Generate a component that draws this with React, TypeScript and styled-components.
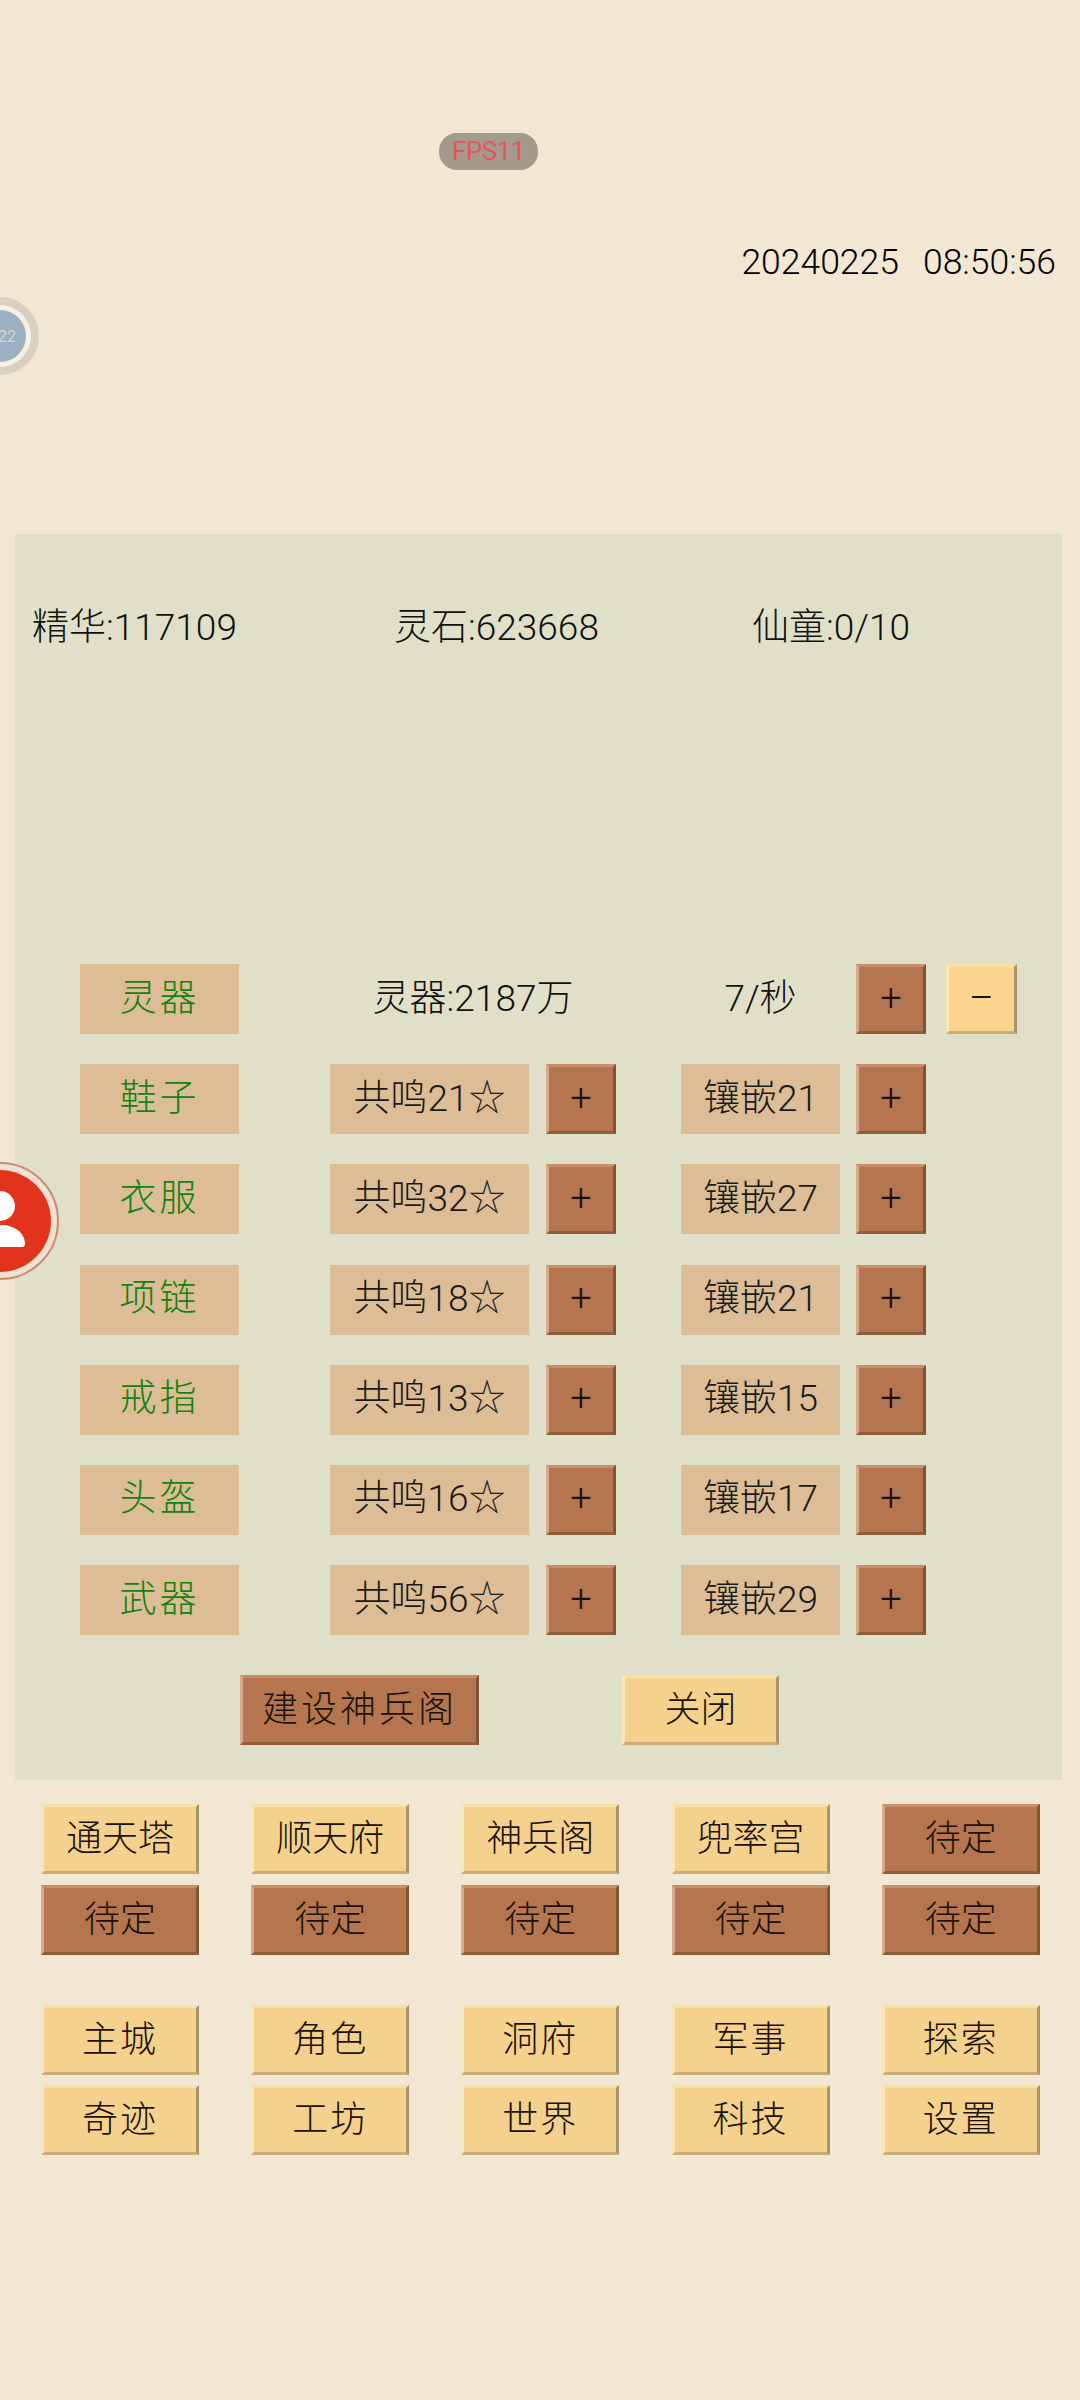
import styled, { createGlobalStyle } from 'styled-components';

const GlobalStyle = createGlobalStyle`
  html, body {
    margin: 0;
    padding: 0;
    background: #f1e7d3;
  }
  body {
    font-family: "Roboto", "Noto Sans CJK SC", sans-serif;
    font-weight: 300;
    color: #111;
  }
`;

const Page = styled.div`
  position: relative;
  width: 1080px;
  height: 2400px;
  overflow: hidden;
  background: #f1e7d3;
`;

const FpsPill = styled.div`
  position: absolute;
  left: 439px;
  top: 133px;
  width: 99px;
  height: 37px;
  border-radius: 18px;
  background: #a39a8c;
  color: #e4565a;
  font-size: 26px;
  font-weight: 400;
  letter-spacing: -0.5px;
  line-height: 37px;
  text-align: center;
`;

const Clock = styled.div`
  display: flex;
  justify-content: flex-end;
  gap: 24px;
  padding: 238px 24px 0 0;
  height: 296px;
  box-sizing: border-box;
  font-size: 35.5px;
  line-height: 48px;
  color: #000;
`;

const TimerBubble = styled.div`
  position: absolute;
  left: -39px;
  top: 297px;
  width: 78px;
  height: 78px;
  border-radius: 50%;
  box-sizing: border-box;
  border: 8px solid #d8d1c1;
  background: #f6efe2;
  display: flex;
  align-items: center;
  justify-content: center;
`;

const TimerFace = styled.div`
  width: 52px;
  height: 52px;
  border-radius: 50%;
  background: #9db0c3;
  color: #d3d6d2;
  font-size: 16px;
  font-weight: 400;
  display: flex;
  align-items: center;
  justify-content: flex-end;
  padding-right: 10px;
  box-sizing: border-box;
`;

const ProfileBubble = styled.div`
  position: absolute;
  left: -59px;
  top: 1162px;
  width: 118px;
  height: 118px;
  border-radius: 50%;
  box-sizing: border-box;
  border: 2px solid #c98b78;
  background: #f1e2cf;
  display: flex;
  align-items: center;
  justify-content: center;
`;

const RedDisc = styled.div`
  width: 102px;
  height: 102px;
  border-radius: 50%;
  background: #e2331c;
`;

const Panel = styled.section`
  box-sizing: border-box;
  margin: 238px 18px 0 15px;
  height: 1246px;
  background: #e0e0c8;
  padding-top: 69px;
`;

const Stats = styled.div`
  display: grid;
  grid-template-columns: 362px 358px 1fr;
  padding-left: 17px;
  font-size: 37px;
  line-height: 50px;
`;

const Rows = styled.div`
  display: flex;
  flex-direction: column;
  gap: 30.2px;
  margin-top: 311px;
`;

const Row = styled.div`
  display: grid;
  grid-template-columns: 250px 216px 135px 175px 90px 71px;
  padding-left: 65px;
  height: 70px;
  font-size: 37px;
`;

const Plate = styled.div<{ $w: number; $green?: boolean }>`
  box-sizing: border-box;
  width: ${p => p.$w}px;
  height: 70px;
  padding-bottom: 9px;
  background: #dcbd95;
  color: ${p => (p.$green ? '#128212' : '#1a1a1a')};
  display: flex;
  align-items: center;
  justify-content: center;
  letter-spacing: ${p => (p.$green ? '3px' : '0')};
`;

const Plain = styled.div<{ $span?: number }>`
  box-sizing: border-box;
  grid-column: span ${p => p.$span ?? 1};
  width: ${p => (p.$span ? '286px' : '159px')};
  height: 70px;
  padding-bottom: 9px;
  display: flex;
  align-items: center;
  justify-content: center;
  white-space: nowrap;
`;

const Bevel = styled.button<{ $tone: 'brown' | 'sand' | 'amber'; $w: number; $track?: number }>`
  box-sizing: border-box;
  width: ${p => p.$w}px;
  height: 70px;
  padding: 0 0 8px;
  margin: 0;
  font: inherit;
  font-size: 36px;
  letter-spacing: ${p => p.$track ?? 0}px;
  color: #1a1208;
  border-style: solid;
  border-width: 3px;
  background: ${p => (p.$tone === 'brown' ? '#b5764f' : p.$tone === 'amber' ? '#fdd48f' : '#f5d18e')};
  border-color: ${p =>
    p.$tone === 'brown'
      ? '#c68f69 #7d5434 #8c5e3c #d8ab8c'
      : '#f8dea9 #a8946a #c8ac7a #fbe6b8'};
  display: flex;
  align-items: center;
  justify-content: center;
  white-space: nowrap;
`;

const StepButton = styled(Bevel)`
  padding-bottom: 3px;
  font-size: 38px;
`;

const Actions = styled.div`
  display: grid;
  grid-template-columns: 382px 157px;
  padding-left: 225px;
  margin-top: 40px;
`;

const NavBlock = styled.div<{ $top: number; $gap: number }>`
  display: grid;
  grid-template-columns: repeat(5, 158px);
  column-gap: 52.2px;
  row-gap: ${p => p.$gap}px;
  padding-left: 41px;
  margin-top: ${p => p.$top}px;
`;

const PersonIcon = () => (
  <svg width="102" height="102" viewBox="0 0 102 102" style={{ display: 'block' }}>
    <circle cx="51" cy="36" r="15" fill="#fff" />
    <path d="M29 77a3 3 0 0 1-3-3c0-11 10-19 25-19s25 8 25 19a3 3 0 0 1-3 3z" fill="#fff" />
  </svg>
);

const gear = [
  { name: '鞋子', res: 21, inlay: 21 },
  { name: '衣服', res: 32, inlay: 27 },
  { name: '项链', res: 18, inlay: 21 },
  { name: '戒指', res: 13, inlay: 15 },
  { name: '头盔', res: 16, inlay: 17 },
  { name: '武器', res: 56, inlay: 29 },
];

const buildings: [string, 'sand' | 'brown'][] = [
  ['通天塔', 'sand'],
  ['顺天府', 'sand'],
  ['神兵阁', 'sand'],
  ['兜率宫', 'sand'],
  ['待定', 'brown'],
  ['待定', 'brown'],
  ['待定', 'brown'],
  ['待定', 'brown'],
  ['待定', 'brown'],
  ['待定', 'brown'],
];

const tabs = ['主城', '角色', '洞府', '军事', '探索', '奇迹', '工坊', '世界', '科技', '设置'];

export default function App() {
  return (
    <Page>
      <GlobalStyle />
      <FpsPill>FPS11</FpsPill>
      <Clock>
        <span>20240225</span>
        <span>08:50:56</span>
      </Clock>
      <TimerBubble>
        <TimerFace>22</TimerFace>
      </TimerBubble>
      <Panel>
        <Stats>
          <span>精华:117109</span>
          <span>灵石:623668</span>
          <span>仙童:0/10</span>
        </Stats>
        <Rows>
          <Row>
            <Plate $w={159} $green>灵器</Plate>
            <Plain $span={2}>灵器:2187万</Plain>
            <Plain>7/秒</Plain>
            <StepButton $tone="brown" $w={70}>+</StepButton>
            <StepButton $tone="amber" $w={71}>–</StepButton>
          </Row>
          {gear.map(g => (
            <Row key={g.name}>
              <Plate $w={159} $green>{g.name}</Plate>
              <Plate $w={199}>共鸣{g.res}☆</Plate>
              <StepButton $tone="brown" $w={70}>+</StepButton>
              <Plate $w={159}>镶嵌{g.inlay}</Plate>
              <StepButton $tone="brown" $w={70}>+</StepButton>
            </Row>
          ))}
        </Rows>
        <Actions>
          <Bevel $tone="brown" $w={239} $track={3}>建设神兵阁</Bevel>
          <Bevel $tone="sand" $w={157}>关闭</Bevel>
        </Actions>
      </Panel>
      <NavBlock $top={24} $gap={11}>
        {buildings.map(([label, tone], i) => (
          <Bevel key={i} $tone={tone} $w={158}>{label}</Bevel>
        ))}
      </NavBlock>
      <NavBlock $top={50} $gap={10}>
        {tabs.map(t => (
          <Bevel key={t} $tone="sand" $w={158} $track={2}>{t}</Bevel>
        ))}
      </NavBlock>
      <ProfileBubble>
        <RedDisc>
          <PersonIcon />
        </RedDisc>
      </ProfileBubble>
    </Page>
  );
}
